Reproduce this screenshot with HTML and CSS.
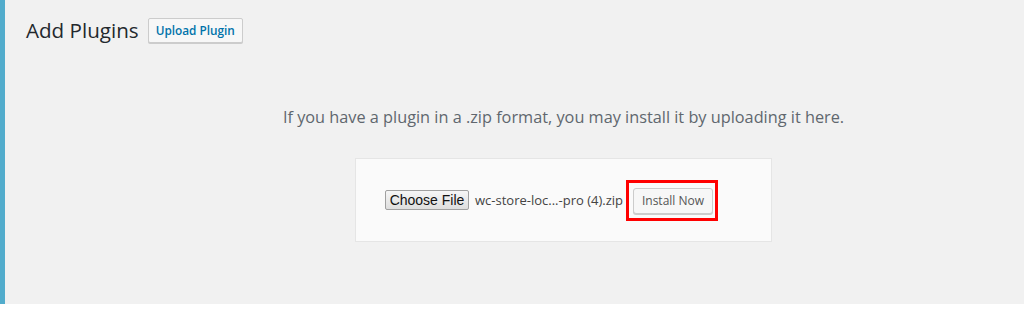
FILE: index.html
```html
<!DOCTYPE html>
<html lang="en">
<head>
    <meta charset="UTF-8">
    <title>Add Plugins</title>
    <link rel="stylesheet" href="styles.css">
</head>
<body>
    <div class="wrap">
        <div class="page-head">
            <h1>Add Plugins</h1>
            <a class="upload-btn" href="#">Upload Plugin</a>
        </div>

        <div class="upload-plugin">
            <p class="install-help">If you have a plugin in a .zip format, you may install it by uploading it here.</p>
            <form class="upload-form">
                <span class="choose-file">Choose File</span>
                <span class="file-name">wc-store-loc...-pro (4).zip</span>
                <span class="highlight">
                    <button type="button" class="install-btn">Install Now</button>
                </span>
            </form>
        </div>
    </div>
</body>
</html>
```

FILE: styles.css
```css
body {
    margin: 0;
    background-color: #fff;
    font-family: 'Open Sans', 'Noto Sans', sans-serif;
    color: #444;
}
.wrap {
    height: 304px;
    background-color: #f1f1f1;
    border-left: 5px solid #52accc;
    overflow: hidden;
}
.page-head {
    display: flex;
    align-items: center;
    padding: 18px 0 0 21px;
}
h1 {
    margin: 0;
    font-size: 20.6px;
    font-weight: 400;
    color: #23282d;
    line-height: 25px;
}
.upload-btn {
    margin-left: 9px;
    padding: 0 7px;
    height: 23px;
    line-height: 23px;
    font-size: 11.8px;
    font-weight: 600;
    color: #0073aa;
    text-decoration: none;
    background-color: #f7f7f7;
    border: 1px solid #ccc;
    border-radius: 2px;
    box-shadow: 0 1px 0 #ccc;
}
.upload-plugin {
    padding-left: 98px;
    text-align: center;
}
.install-help {
    margin: 62px 0 0;
    font-size: 16.3px;
    line-height: 24px;
    color: #60676e;
}
.upload-form {
    display: flex;
    align-items: center;
    box-sizing: border-box;
    width: 417px;
    height: 84px;
    margin: 29px auto 0;
    padding-left: 29px;
    background-color: #fafafa;
    border: 1px solid #e5e5e5;
}
.choose-file {
    box-sizing: border-box;
    width: 84px;
    height: 20px;
    line-height: 18px;
    font-family: 'Liberation Sans', Arial, sans-serif;
    font-size: 14px;
    color: #111;
    background: linear-gradient(#f6f6f6, #dedede);
    border: 1px solid #a0a0a0;
    border-radius: 2px;
}
.file-name {
    margin-left: 6px;
    font-size: 13px;
    color: #444;
}
.highlight {
    margin-left: 3px;
    padding: 5px 2px 4px 4px;
    border: 3px solid #f00;
}
.install-btn {
    display: block;
    width: 80px;
    height: 26px;
    padding: 0;
    font-family: 'Open Sans', 'Noto Sans', sans-serif;
    font-size: 12px;
    color: #555;
    background-color: #f7f7f7;
    border: 1px solid #ccc;
    border-radius: 3px;
    box-shadow: 0 1px 0 #ccc;
}
```
